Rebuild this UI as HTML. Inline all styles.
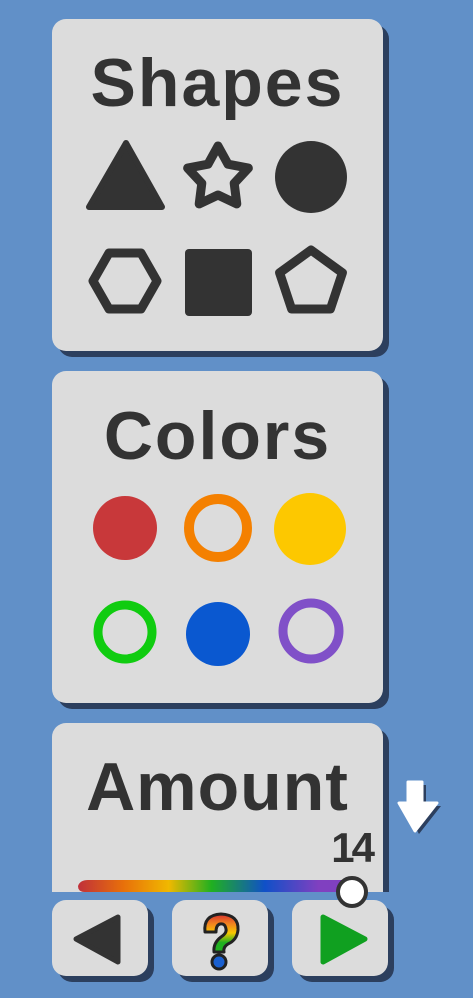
<!DOCTYPE html>
<html><head><meta charset="utf-8"><style>
html,body{margin:0;padding:0;}
body{width:473px;height:998px;overflow:hidden;background:#6190c8;position:relative;font-family:"Liberation Sans",sans-serif;}
.p{position:absolute;background:#dcdcdc;border-radius:14px;box-shadow:6px 6px 0 #2c3f5e;}
.t{position:absolute;text-align:center;font-weight:bold;color:#333;letter-spacing:2px;}
</style></head><body>
<div class="p" style="left:52px;top:19px;width:331px;height:332px;"></div>
<div class="t" style="top:44px;left:52px;width:331px;font-size:68px;">Shapes</div>
<div class="p" style="left:52px;top:371px;width:331px;height:332px;"></div>
<div class="t" style="top:397px;left:52px;width:331px;font-size:68px;">Colors</div>
<div style="position:absolute;left:0;top:0;width:473px;height:892px;overflow:hidden;">
<div class="p" style="left:52px;top:723px;width:331px;height:300px;"></div>
</div>
<div class="t" style="top:748px;left:52px;width:331px;font-size:68px;letter-spacing:1px;">Amount</div>
<div class="t" style="top:824px;left:290px;width:82px;font-size:42px;text-align:right;letter-spacing:-3px;">14</div>
<div class="p" style="left:52px;top:900px;width:96px;height:76px;"></div>
<div class="p" style="left:172px;top:900px;width:96px;height:76px;"></div>
<div class="p" style="left:292px;top:900px;width:96px;height:76px;"></div>
<svg width="473" height="998" style="position:absolute;left:0;top:0">
<defs><linearGradient id="rb" x1="0" x2="1">
<stop offset="0" stop-color="#c0303a"/><stop offset=".17" stop-color="#e8700a"/><stop offset=".34" stop-color="#f0b800"/><stop offset=".5" stop-color="#20b020"/><stop offset=".7" stop-color="#1050c8"/><stop offset=".9" stop-color="#8040c0"/></linearGradient>
<linearGradient id="qg" x1="0" y1="0" x2="0" y2="1">
<stop offset="0" stop-color="#d83030"/><stop offset=".25" stop-color="#f08020"/><stop offset=".5" stop-color="#f8c800"/><stop offset=".75" stop-color="#20b020"/><stop offset="1" stop-color="#20b020"/></linearGradient></defs>
<g fill="#333" stroke="#333" stroke-linejoin="round">
<path d="M126 143 L89 207 L162 207 Z" stroke-width="6"/>
<path d="M218 146 L228 164.2 L248.4 168.1 L234.2 183.3 L236.8 203.9 L218 195 L199.2 203.9 L201.8 183.3 L187.6 168.1 L208 164.2 Z" fill="none" stroke-width="9"/>
<circle cx="311" cy="177" r="36" stroke="none"/>
<path d="M93 281 L109 253 L141 253 L157 281 L141 309 L109 309 Z" fill="none" stroke-width="9"/>
<rect x="185" y="249" width="67" height="67" rx="4" stroke="none"/>
<path d="M311 250 L342.4 272.8 L330.4 309 L291.6 309 L279.6 272.8 Z" fill="none" stroke-width="9"/>
</g>
<circle cx="125" cy="528" r="32" fill="#c8383a"/>
<circle cx="218" cy="528" r="29" fill="none" stroke="#f48000" stroke-width="10"/>
<circle cx="310" cy="529" r="36" fill="#fdc800"/>
<circle cx="125" cy="632" r="27" fill="none" stroke="#10cc10" stroke-width="9"/>
<circle cx="218" cy="634" r="32" fill="#0a58d0"/>
<circle cx="311" cy="631" r="28" fill="none" stroke="#8050c8" stroke-width="9"/>
<path d="M85 892 Q78 892 78 886 Q80 880 88 880 L345 880 L345 892 Z" fill="url(#rb)"/>
<circle cx="352" cy="892" r="14" fill="#fff" stroke="#333" stroke-width="4"/>
<path d="M408 782 L422 782 L422 803 L437 803 L415 831 L399 803 L408 803 Z" fill="#2c3f5e" transform="translate(4,3)"/>
<path d="M408 782 L422 782 L422 803 L437 803 L415 831 L399 803 L408 803 Z" fill="#fff" stroke="#fff" stroke-width="3" stroke-linejoin="round"/>
<path d="M118 917 L118 962 L76 939 Z" fill="#333" stroke="#333" stroke-width="5" stroke-linejoin="round"/>
<path d="M323 917 L323 962 L365 939 Z" fill="#10a020" stroke="#10a020" stroke-width="5" stroke-linejoin="round"/>
<path d="M205 932 Q203 915 221 914 Q239 915 238 930 Q237 940 228 944 Q223 947 224 952 L214 952 Q213 943 221 937 Q227 933 226 929 Q225 923 220 924 Q216 925 216 932 Z" fill="url(#qg)" stroke="#222" stroke-width="3" stroke-linejoin="round"/>
<circle cx="219" cy="962" r="7" fill="#1a60d0" stroke="#222" stroke-width="3"/>
</svg>
</body></html>
